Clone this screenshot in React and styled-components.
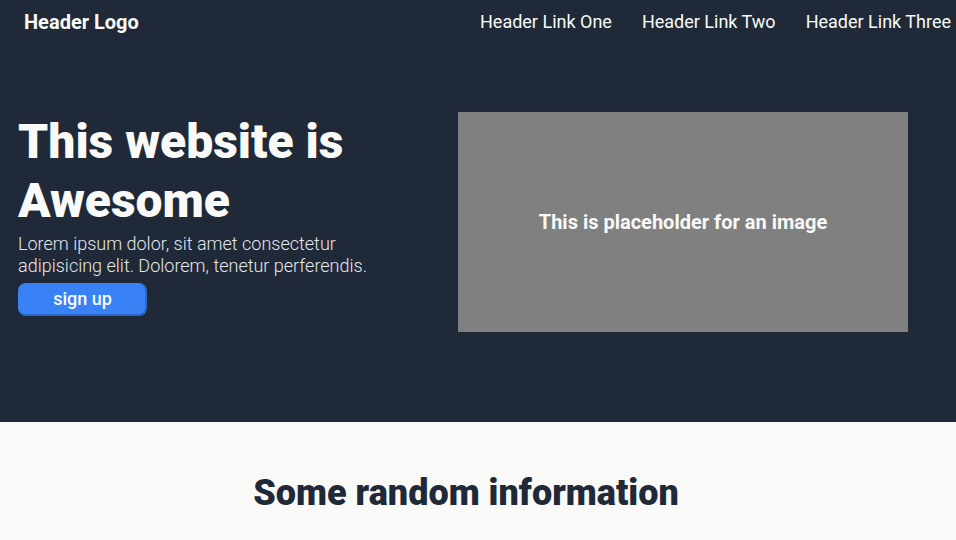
import styled, { createGlobalStyle } from 'styled-components';

const colors = {
    dark: '#1f2937',
    light: '#f9faf8',
    blue: '#3882f6',
    gray: '#808080',
};

const GlobalStyle = createGlobalStyle`
    * { box-sizing: border-box; }
    body {
        margin: 0;
        font-family: Roboto, "Liberation Sans", sans-serif;
        background: ${colors.light};
    }
`;

const Top = styled.div`
    background: ${colors.dark};
    color: #f9faf8;
`;

const Header = styled.header`
    height: 44px;
    display: flex;
    justify-content: space-between;
    align-items: center;
    padding: 0 5px 0 24px;
`;

const Logo = styled.div`
    font-size: 20px;
    font-weight: 700;
`;

const Links = styled.nav`
    display: flex;
    gap: 30px;
    font-size: 18px;
    margin-top: -2px;
`;

const Hero = styled.section`
    height: 378px;
    display: flex;
    align-items: flex-start;
    padding: 68px 48px 0 18px;
    gap: 38px;
`;

const HeroText = styled.div`
    width: 402px;
    h1 {
        margin: 0;
        font-size: 48px;
        font-weight: 900;
        line-height: 59px;
        color: #f9faf8;
    }
    p {
        margin: 3px 0 6px;
        font-size: 18px;
        font-weight: 300;
        line-height: 22px;
        color: #e5e7eb;
    }
`;

const SignUp = styled.button`
    width: 129px;
    height: 33px;
    background: ${colors.blue};
    color: #f9faf8;
    font-family: inherit;
    font-size: 18px;
    font-weight: 500;
    border: none;
    border-right: 2px solid #2f6acb;
    border-bottom: 2px solid #2f6acb;
    border-radius: 8px;
    padding: 0 0 0 2px;
`;

const Placeholder = styled.div`
    width: 450px;
    height: 220px;
    background: ${colors.gray};
    display: flex;
    justify-content: center;
    align-items: center;
    font-size: 20px;
    font-weight: 700;
    color: #f9faf8;
`;

const Info = styled.section`
    padding: 50px 24px 0 0;
    text-align: center;
    h2 {
        margin: 0;
        font-size: 36px;
        font-weight: 900;
        color: ${colors.dark};
    }
`;

export default function App() {
    return (
        <>
            <GlobalStyle />
            <Top>
                <Header>
                    <Logo>Header Logo</Logo>
                    <Links>
                        <span>Header Link One</span>
                        <span>Header Link Two</span>
                        <span>Header Link Three</span>
                    </Links>
                </Header>
                <Hero>
                    <HeroText>
                        <h1>This website is Awesome</h1>
                        <p>Lorem ipsum dolor, sit amet consectetur adipisicing elit. Dolorem, tenetur perferendis.</p>
                        <SignUp>sign up</SignUp>
                    </HeroText>
                    <Placeholder>This is placeholder for an image</Placeholder>
                </Hero>
            </Top>
            <Info>
                <h2>Some random information</h2>
            </Info>
        </>
    );
}
